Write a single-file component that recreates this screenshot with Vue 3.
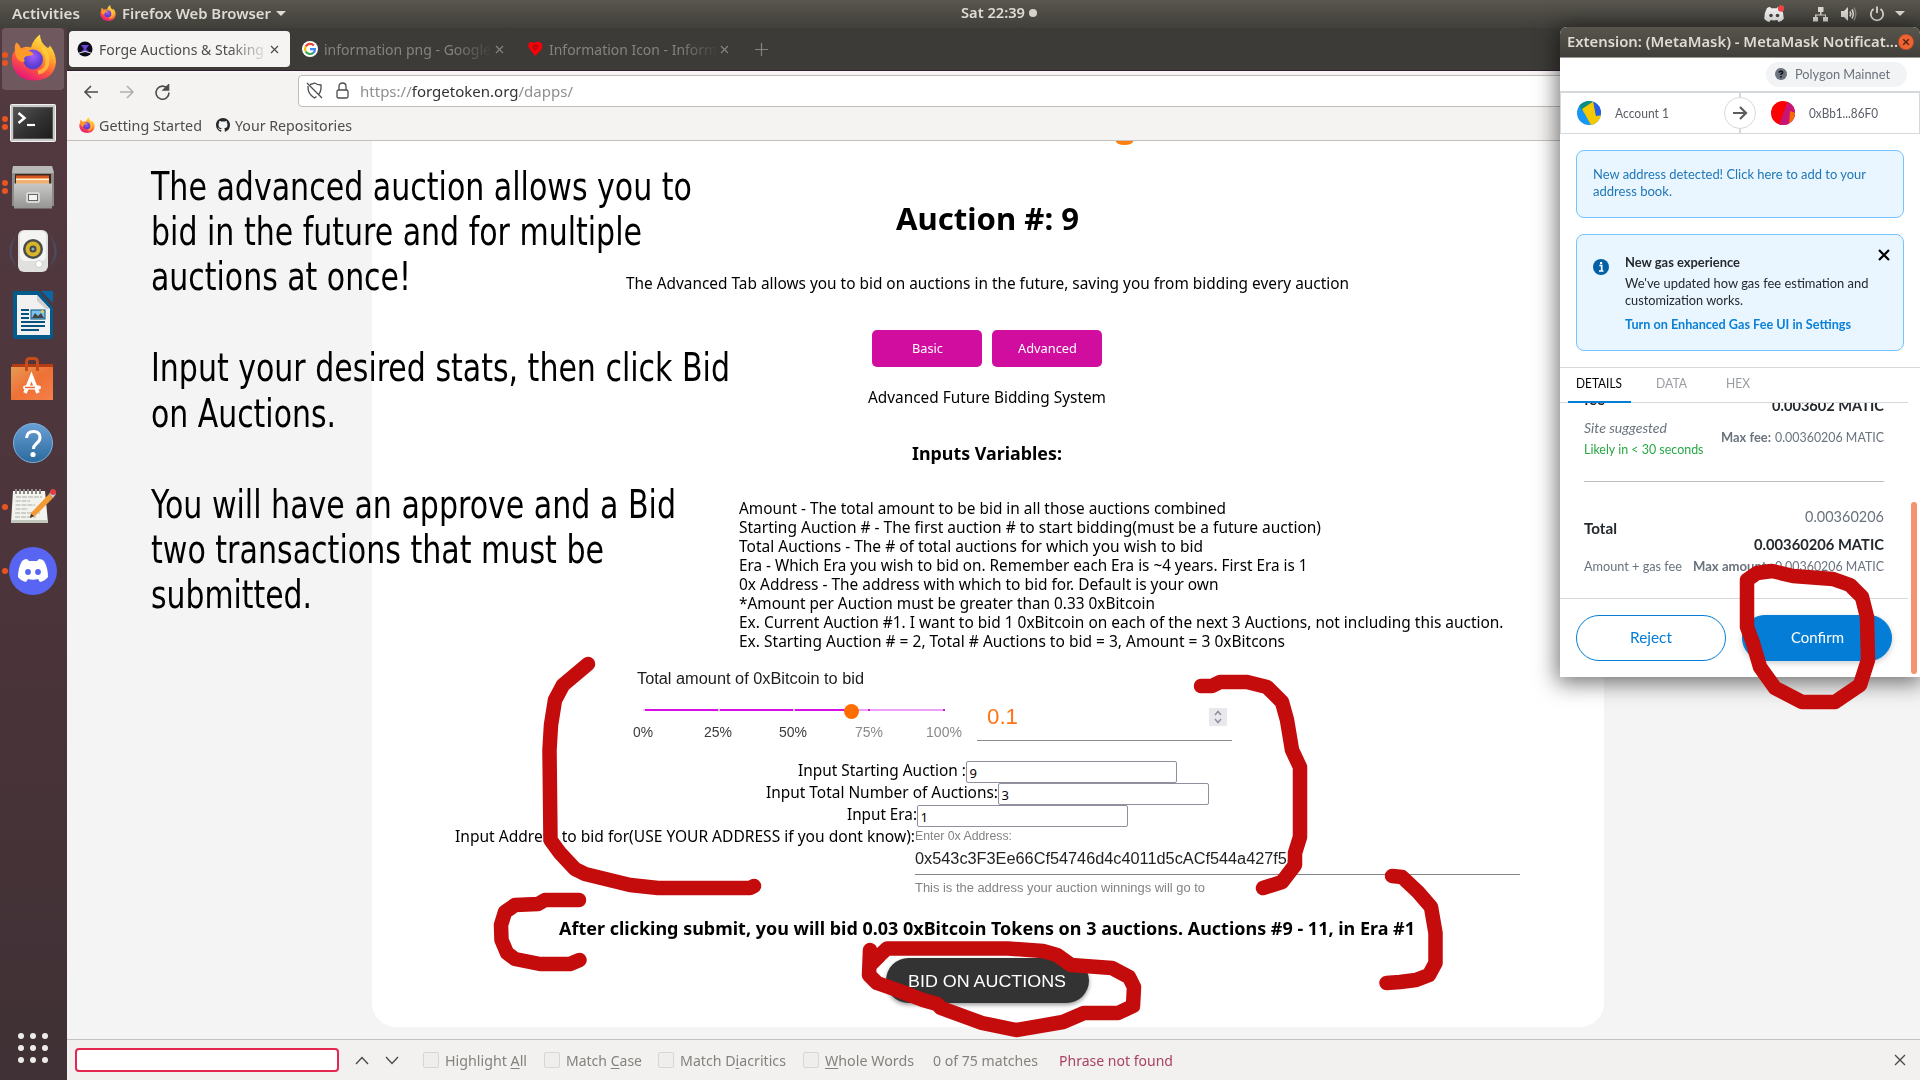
<script setup>
// Condenses or widens a single line of text so that it occupies the given width.
const vFit = {
  mounted(el, { value }) {
    el.style.display = 'inline-block'
    el.style.whiteSpace = 'nowrap'
    const natural = el.getBoundingClientRect().width
    el.style.transformOrigin = '0 50%'
    el.style.transform = `scaleX(${value / natural})`
    el.style.marginRight = `${value - natural}px`
  },
}

const note = [
  ['The advanced auction allows you to', 541],
  ['bid in the future and for multiple', 491],
  ['auctions at once!', 260],
  ['', 0],
  ['Input your desired stats, then click Bid', 579],
  ['on Auctions.', 185],
  ['', 0],
  ['You will have an approve and a Bid', 525],
  ['two transactions that must be', 453],
  ['submitted.', 161],
]

const rules = [
  ['Amount - The total amount to be bid in all those auctions combined', 487],
  ['Starting Auction # - The first auction # to start bidding(must be a future auction)', 582],
  ['Total Auctions - The # of total auctions for which you wish to bid', 464],
  ['Era - Which Era you wish to bid on. Remember each Era is ~4 years. First Era is 1', 568.5],
  ['0x Address - The address with which to bid for. Default is your own', 479.5],
  ['*Amount per Auction must be greater than 0.33 0xBitcoin', 416],
  ['Ex. Current Auction #1. I want to bid 1 0xBitcoin on each of the next 3 Auctions, not including this auction.', 764.5],
  ['Ex. Starting Auction # = 2, Total # Auctions to bid = 3, Amount = 3 0xBitcons', 546],
]

const inputs = [
  ['Input Starting Auction :', 168, '9'],
  ['Input Total Number of Auctions:', 232, '3'],
  ['Input Era:', 70, '1'],
]

const ticks = [
  ['0%', 20, true],
  ['25%', 28, true],
  ['50%', 28, true],
  ['75%', 28, false],
  ['100%', 36, false],
]

const findOptions = [
  ['Highlight ', 'A', 'll', 82],
  ['Match ', 'C', 'ase', 76],
  ['Match D', 'i', 'acritics', 106],
  ['', 'W', 'hole Words', 89],
]

const strokes = [
  'M588 664L563 685L555 700L551 725L549.5 750L550.5 840L560 853L575 869L585 874L630 885L658 888L750 888L754 886',
  'M579 900H545L538 904L515 905L505 912L501 925L501.500 940L507 953L515 959L540 964H570L579.500 960',
  'M1201 686H1212L1220 682H1247L1267 687L1282 702L1287 720L1292 750L1300 767V837L1295 853V865L1282 882L1263 888',
  'M1392 876L1402 877L1418 892L1431 907L1435.500 933V963L1429 975L1416 980L1400 982L1386.500 983',
  'M870 950L869 975L877 983L897 990L923 1000L937 1004L941 1008L982 1023L1016 1030L1063 1022L1084 1013H1118L1133 1006L1134 987L1129 977L1112 968L1071 965L1057 955L1043 951L1008 948.500H887L880 955L870 965',
  'M1747 580V627L1753 643L1760 667L1775 688L1802 702H1835L1860 685L1868 660L1867 617L1862 597L1850 585L1833 579L1793 576L1772 571L1757 573Z',
]
</script>

<template>
  <div class="desktop">
    <svg class="defs" width="0" height="0">
      <defs>
        <linearGradient id="flame" x1=".8" y1="0" x2=".3" y2="1">
          <stop offset="0" stop-color="#fff44f" /><stop offset=".35" stop-color="#ffb02e" />
          <stop offset=".65" stop-color="#ff5a3c" /><stop offset="1" stop-color="#e5127d" />
        </linearGradient>
        <radialGradient id="globe" cx=".5" cy=".35">
          <stop offset="0" stop-color="#a45cff" /><stop offset="1" stop-color="#5a3fd0" />
        </radialGradient>
        <linearGradient id="metal" x1="0" y1="0" x2="0" y2="1">
          <stop offset="0" stop-color="#c9c9c7" /><stop offset="1" stop-color="#949492" />
        </linearGradient>
        <linearGradient id="screen" x1="0" y1="0" x2="1" y2="1">
          <stop offset="0" stop-color="#555" /><stop offset=".5" stop-color="#333" /><stop offset="1" stop-color="#1c1c1c" />
        </linearGradient>
        <linearGradient id="help" x1="0" y1="0" x2="0" y2="1">
          <stop offset="0" stop-color="#6a9fd6" /><stop offset="1" stop-color="#2a6a9c" />
        </linearGradient>
        <linearGradient id="bag" x1="0" y1="0" x2="1" y2="1">
          <stop offset="0" stop-color="#e79a55" /><stop offset=".5" stop-color="#ef7135" /><stop offset="1" stop-color="#f58049" />
        </linearGradient>
        <symbol id="fox" viewBox="0 0 46 46">
          <path fill="url(#flame)" d="M5 8Q8 9 10 14Q14 11 20 13Q22 5 29 0Q29 8 36 13Q38 14 39 11Q45 19 45 28Q43 45 24 46Q4 46 1 28Q0 20 4 16Q3 12 5 8Z" />
          <circle cx="22" cy="25" r="10" fill="url(#globe)" />
          <path fill="#ff9a2a" d="M5 9Q8 12 11 15Q16 14 21 18Q24 20 20 21Q14 21 13 24Q15 29 10 27Q2 24 5 9Z" />
          <path fill="none" stroke="#ffd23a" stroke-width="4" d="M31 13Q38 20 36 30Q34 37 27 38" opacity=".7" />
        </symbol>
        <symbol id="discord" viewBox="0 0 30 23">
          <path d="M9 0Q6 0 4 2Q0 9 0 18Q3 22 8 23L10 20Q15 21.500 20 20L22 23Q27 22 30 18Q30 9 26 2Q24 0 21 0L19 2H11Z" />
        </symbol>
      </defs>
    </svg>

    <header class="topbar">
      <b class="activities"><span v-fit="68">Activities</span></b>
      <svg class="app-ico" width="16" height="16"><use href="#fox" /></svg>
      <b class="app-name"><span v-fit="149">Firefox Web Browser</span></b>
      <i class="caret app-caret"></i>
      <div class="clock"><b><span v-fit="64">Sat 22:39</span></b><i></i></div>
      <div class="tray">
        <svg width="22" height="18" viewBox="0 0 22 18"><use href="#discord" y="2" width="20" height="15" fill="#f2f2f2" /><circle cx="7" cy="10.500" r="1.800" fill="#4a4842" /><circle cx="13.500" cy="10.500" r="1.800" fill="#4a4842" /><circle cx="17" cy="3.500" r="3.200" fill="#f04747" /></svg>
        <svg width="16" height="16" fill="#dfdbd2"><path d="M5 1h5.500v5H8.500v2.500H13V11h2v4.500h-5V11h2V9.500H3.500V11H5v4.500H0V11h2V8.500h5V6H5z" /></svg>
        <svg width="17" height="16"><path d="M0 5h3l4-4v14l-4-4H0z" fill="#dfdbd2" /><path d="M9 5.500Q10.500 8 9 10.500M11 3.500Q13.500 8 11 12.500" fill="none" stroke="#dfdbd2" stroke-width="1.600" /><path d="M13 1.500Q16.500 8 13 14.500" fill="none" stroke="#8a8780" stroke-width="1.500" /></svg>
        <svg width="16" height="16" fill="none" stroke="#dfdbd2" stroke-width="1.800"><path d="M4.500 3A6.200 6.200 0 1 0 11.500 3M8 .5V7" /></svg>
        <i class="caret"></i>
      </div>
    </header>

    <div class="main">
      <nav class="dock">
        <div class="tile first"><svg width="46" height="47"><use href="#fox" /></svg><i class="run a"></i><i class="run b"></i></div>
        <div class="tile">
          <svg width="46" height="38"><rect x=".5" y=".5" width="45" height="37" rx="1" fill="#c9c9c9" stroke="#f1f1f1" /><rect x="3.500" y="3.500" width="39" height="31" fill="url(#screen)" stroke="#555" /><path d="M8.500 9L14.500 14L8.500 19" fill="none" stroke="#fff" stroke-width="2.500" /><path d="M17 21H25" stroke="#fff" stroke-width="2.200" /></svg>
          <i class="run a"></i><i class="run b"></i>
        </div>
        <div class="tile">
          <svg width="44" height="44"><path d="M2 1H41L43 8V41H1V8Z" fill="#8c8c8a" /><path d="M2 1H41L43 8H1Z" fill="#b9b9b7" /><rect x="4" y="9" width="36" height="10" fill="#3a2a22" /><path d="M5 10.500H38V19H5Z" fill="#d9581f" /><path d="M5 13H38V19H5Z" fill="#f0b070" /><path d="M5 14.500H38" stroke="#fff3df" /><rect x="3" y="18.500" width="38" height="25" fill="url(#metal)" /><rect x="15" y="27" width="14" height="11" rx="2.500" fill="#d8d8d6" /><rect x="17.500" y="29.500" width="9" height="6" fill="#f3f3f3" stroke="#666" /></svg>
          <i class="run a"></i><i class="run b"></i>
        </div>
        <div class="tile">
          <svg width="48" height="44"><path d="M6 8Q-2 22 6 36M42 8Q50 22 42 36M3 13Q-1 22 3 31M45 13Q49 22 45 31" fill="none" stroke="#4d4a60" stroke-width="1.400" /><rect x="9" y="1" width="30" height="42" rx="6" fill="#e0e0de" /><rect x="11" y="2" width="26" height="30" rx="5" fill="#f4f4f2" /><circle cx="24" cy="20" r="10" fill="#4c4c4a" /><circle cx="24" cy="20" r="7.500" fill="#d8b52a" /><circle cx="24" cy="20" r="3.500" fill="#44494d" /><circle cx="24" cy="20" r="1.500" fill="#9aa" /><circle cx="30" cy="35" r="3.500" fill="#fff" stroke="#ccc" /></svg>
        </div>
        <div class="tile">
          <svg width="40" height="48"><path d="M2 0H26L40 17V46Q40 48 38 48H2Q0 48 0 46V2Q0 0 2 0Z" fill="#055a8c" /><path d="M28 0H40V12Z" fill="#0a67a3" /><path d="M4 4H24L37 18V44H4Z" fill="#f1f1f1" /><path d="M24 4V10L33 18H37Z" fill="#cfcfcf" /><path d="M8 19H16M8 23H16M8 27H16M8 31H32M8 35H32M8 39H26" stroke="#07527f" stroke-width="1.800" /><rect x="18" y="19" width="14" height="9" fill="#7cc4ef" stroke="#07527f" /><path d="M19 27L22 22L25 25L28 22L31 27Z" fill="#444" /><circle cx="29.500" cy="20.500" r="1.500" fill="#f3cf3a" /></svg>
        </div>
        <div class="tile">
          <svg width="44" height="44"><path d="M1 7H42V14H1Z" fill="#b33c12" /><rect x="0" y="10" width="42" height="33" fill="url(#bag)" /><path d="M15.500 14V5Q15.500 1.500 19 1.500H23Q26.500 1.500 26.500 5V14" fill="none" stroke="#c94a1c" stroke-width="3" /><path d="M14 36L20.500 19.500L27 36" fill="none" stroke="#fff" stroke-width="3.600" /><rect x="12" y="28.500" width="18" height="4" rx="2" fill="#fff" /><path d="M14 30.500H24" stroke="#ef6b30" stroke-width="1.500" /></svg>
        </div>
        <div class="tile"><svg width="42" height="42"><circle cx="21" cy="21" r="19.500" fill="url(#help)" stroke="#7fb0dd" /><path d="M14.500 16Q15 9.500 21.500 9.500Q28 9.500 28 15.500Q28 19 24 22Q21.500 24 21.500 27" fill="none" stroke="#fff" stroke-width="3" /><circle cx="21" cy="32.500" r="2.600" fill="#fff" /></svg></div>
        <div class="tile pad">
          <svg width="46" height="38"><path d="M3 4H35L38 36H1Z" fill="#f3f3ee" /><path d="M1 33H38V36H1Z" fill="#c3c6ba" /><path d="M6 10H32M5.500 14H20M5.500 18H25M5.500 22H18M5 26H30M5 30H26" stroke="#aaa" stroke-dasharray="5 1" /><path d="M6 2V7M10 2V7M14 2V7M18 2V7M22 2V7M26 2V7M30 2V7" stroke="#888" stroke-width="2" /><path d="M21 26L39 7L43 11L25 29L20 31Z" fill="#f29b35" /><path d="M39 7L42 3L46 7L43 11Z" fill="#ccc" /><circle cx="43" cy="5" r="3" fill="#e33d44" /><path d="M20 31L21 27L24 29Z" fill="#333" /></svg>
          <i class="run c"></i>
        </div>
        <div class="tile"><svg width="48" height="48"><circle cx="24" cy="24" r="24" fill="#5865f2" /><use href="#discord" x="9" y="12" width="30" height="23" fill="#fff" /><circle cx="19" cy="25" r="2.900" fill="#5865f2" /><circle cx="29" cy="25" r="2.900" fill="#5865f2" /></svg><i class="run c"></i></div>
        <div class="apps"><i v-for="n in 9" :key="n"></i></div>
      </nav>

      <section class="browser">
        <div class="tabs">
          <div class="tab on">
            <svg width="16" height="16"><circle cx="8" cy="8" r="7.500" fill="#0c0a18" /><path d="M4 4H12L9 8L12 11H4L7 8Z" fill="#6a42d8" /><path d="M2 12Q8 9 14 12" stroke="#ddd" fill="none" /></svg>
            <div class="label"><span v-fit="165">Forge Auctions &amp; Staking</span></div>
            <svg class="x" width="9" height="9"><path d="M1 1L8 8M8 1L1 8" /></svg>
          </div>
          <div class="tab">
            <svg width="16" height="16"><circle cx="8" cy="8" r="8" fill="#fff" /><g fill="none" stroke-width="2.200"><path d="M11.800 4.500A5 5 0 0 0 3.700 5.500" stroke="#ea4335" /><path d="M3.700 5.500A5 5 0 0 0 3.700 10.500" stroke="#fbbc05" /><path d="M3.700 10.500A5 5 0 0 0 11.300 11.800" stroke="#34a853" /><path d="M11.300 11.800A5 5 0 0 0 13 8.200H8" stroke="#4285f4" /></g></svg>
            <div class="label"><span v-fit="167">information png - Google</span></div>
            <svg class="x" width="9" height="9"><path d="M1 1L8 8M8 1L1 8" /></svg>
          </div>
          <div class="tab">
            <svg width="16" height="16"><path d="M8 15L2 7Q0 2 4 1Q6 1 7 2Q12-1 15 3Q16 7 13 10Z" fill="#fb0007" /><path d="M8 6Q10 5 10 7Q9 9 7 8Q5 6 7 4Q10 3 12 6" fill="none" stroke="#8b1010" /></svg>
            <div class="label"><span v-fit="168">Information Icon - Inform</span></div>
            <svg class="x" width="9" height="9"><path d="M1 1L8 8M8 1L1 8" /></svg>
          </div>
          <svg class="plus" width="13" height="13"><path d="M6.500 0V13M0 6.500H13" /></svg>
        </div>

        <div class="toolbar">
          <svg class="t-back" width="16" height="14"><path d="M15 7H2M8 1L2 7L8 13" /></svg>
          <svg class="t-fwd" width="16" height="14"><path d="M1 7H14M8 1L14 7L8 13" /></svg>
          <svg class="t-load" width="17" height="17"><path d="M13.500 4.500A6.500 6.500 0 1 0 15 8.500" /><path d="M14.500 1V6H9.500Z" fill="#4c4c4a" /></svg>
          <div class="url">
            <svg width="17" height="17"><path d="M4 2.500Q7 2 8.500 1Q11.500 3 15 3Q15.500 9 12.500 13M10.500 14.500L8.500 16Q1.500 12 2 4M1 1L16 16" /></svg>
            <svg class="lock" width="13" height="17"><rect x="1" y="8" width="11" height="8" rx="1.500" /><path d="M3 8V4.500Q3 1 6.500 1Q10 1 10 4.500V8" /></svg>
            <span v-fit="213"><em>https://</em>forgetoken.org<em>/dapps/</em></span>
          </div>
        </div>
        <div class="bookmarks">
          <svg width="16" height="16"><use href="#fox" /></svg><span v-fit="103" class="bm1">Getting Started</span>
          <svg width="14" height="14" viewBox="0 0 16 16"><path fill="#24292f" d="M8 0C3.580 0 0 3.580 0 8c0 3.540 2.290 6.530 5.470 7.590.4.070.55-.17.55-.38 0-.19-.01-.82-.01-1.490-2.010.37-2.530-.49-2.690-.94-.09-.23-.48-.94-.82-1.130-.28-.15-.68-.52-.01-.53.63-.01 1.080.58 1.230.82.72 1.210 1.870.87 2.330.66.07-.52.28-.87.51-1.070-1.780-.2-3.640-.89-3.640-3.950 0-.87.31-1.590.82-2.150-.08-.2-.36-1.020.08-2.120 0 0 .67-.21 2.200.82a7.600 7.600 0 0 1 4 0c1.530-1.040 2.200-.82 2.200-.82.44 1.100.16 1.920.08 2.120.51.56.82 1.270.82 2.150 0 3.070-1.870 3.750-3.650 3.950.29.25.54.73.54 1.480 0 1.070-.01 1.930-.01 2.200 0 .21.15.46.55.38A8 8 0 0 0 16 8c0-4.420-3.580-8-8-8z" /></svg><span v-fit="117">Your Repositories</span>
        </div>

        <div class="page">
          <main class="card">
            <div class="logo"></div>
            <h1><span v-fit="183">Auction #: 9</span></h1>
            <p class="sub"><span v-fit="723">The Advanced Tab allows you to bid on auctions in the future, saving you from bidding every auction</span></p>
            <div class="buttons"><button><span v-fit="31">Basic</span></button><button><span v-fit="59">Advanced</span></button></div>
            <p class="system"><span v-fit="238">Advanced Future Bidding System</span></p>
            <h3><span v-fit="150">Inputs Variables:</span></h3>
            <ul class="rules"><li v-for="r in rules" :key="r[0]"><span v-fit="r[1]">{{ r[0] }}</span></li></ul>
            <div class="amount">
              <div class="range">
                <div class="range-title"><span v-fit="227">Total amount of 0xBitcoin to bid</span></div>
                <div class="track"><div class="filled"></div><i class="m m0"></i><i class="m m1"></i><i class="m m2"></i><i class="m m3"></i><i class="m m4"></i><div class="thumb"></div></div>
                <div class="ticks"><div v-for="t in ticks" :key="t[0]" :class="{ lit: t[2] }"><span v-fit="t[1]">{{ t[0] }}</span></div></div>
              </div>
              <div class="value"><span v-fit="31">0.1</span><svg width="18" height="18"><rect width="18" height="18" fill="#e9e9ed" /><path d="M6 7L9 3.500L12 7M6 11L9 14.500L12 11" fill="none" stroke="#8f8f9d" stroke-width="1.500" /></svg></div>
            </div>
            <div class="fields">
              <div v-for="f in inputs" :key="f[0]" class="field"><span v-fit="f[1]">{{ f[0] }}</span><div class="box">{{ f[2] }}</div></div>
              <div class="field addr">
                <span v-fit="460">Input Address to bid for(USE YOUR ADDRESS if you dont know):</span>
                <div class="address">
                  <small><span v-fit="97">Enter 0x Address:</span></small>
                  <div class="hex"><span v-fit="381">0x543c3F3Ee66Cf54746d4c4011d5cACf544a427f5a</span></div>
                  <small class="helper"><span v-fit="290">This is the address your auction winnings will go to</span></small>
                </div>
              </div>
            </div>
            <h3 class="after"><span v-fit="856">After clicking submit, you will bid 0.03 0xBitcoin Tokens on 3 auctions. Auctions #9 - 11, in Era #1</span></h3>
            <div class="bid"><span v-fit="158">BID ON AUCTIONS</span></div>
          </main>
        </div>

        <footer class="find">
          <div class="find-input"></div>
          <svg width="14" height="9"><path d="M1 8L7 1.500L13 8" /></svg>
          <svg width="14" height="9"><path d="M1 1L7 7.500L13 1" /></svg>
          <div class="opts"><label v-for="o in findOptions" :key="o[1]"><i></i><span v-fit="o[3]">{{ o[0] }}<u>{{ o[1] }}</u>{{ o[2] }}</span></label></div>
          <span v-fit="105" class="count">0 of 75 matches</span>
          <span v-fit="114" class="nf">Phrase not found</span>
          <svg class="find-x" width="12" height="12"><path d="M1 1L11 11M11 1L1 11" /></svg>
        </footer>
      </section>
    </div>

    <div class="note"><div v-for="(l, i) in note" :key="i"><span v-if="l[0]" v-fit="l[1]">{{ l[0] }}</span></div></div>

    <aside class="mm">
      <div class="mm-title"><b><span v-fit="331">Extension: (MetaMask) - MetaMask Notificat...</span></b><svg width="16" height="16"><circle cx="8" cy="8" r="7.700" fill="#ec6434" stroke="#b9431b" stroke-width=".6" /><path d="M5.200 5.200L10.800 10.800M10.800 5.200L5.200 10.800" stroke="#4a2010" stroke-width="1.300" /></svg></div>
      <div class="net"><div class="pill"><svg width="12" height="12"><circle cx="6" cy="6" r="6" fill="#6a737d" /><path d="M4.200 4.600Q4.300 3.200 6 3.200Q7.800 3.300 7.700 4.600Q7.600 5.500 6 6.200V7" fill="none" stroke="#111" stroke-width="1.400" /><rect x="5.300" y="8" width="1.500" height="1.500" fill="#111" /></svg><span v-fit="95">Polygon Mainnet</span></div></div>
      <div class="route">
        <svg width="24" height="24"><clipPath id="av"><circle cx="12" cy="12" r="12" /></clipPath><g clip-path="url(#av)"><rect width="24" height="24" fill="#1897f2" /><path d="M0 0H24L5 10Z" fill="#0b8c82" /><path d="M5 8L17 0L19 15L24 14V24H14Z" fill="#f5c800" /><path d="M16 0H24V14L19 15Z" fill="#235fe0" /></g></svg>
        <span v-fit="54" class="from">Account 1</span>
        <div class="go"><svg width="16" height="14"><path d="M1 7H14M8 1L14 7L8 13" fill="none" stroke="#5b5d5e" stroke-width="2.200" /></svg></div>
        <svg width="24" height="24"><g clip-path="url(#av)"><rect width="24" height="24" fill="#fb0202" /><path d="M17 0H24V24H8Z" fill="#c81477" /><path d="M19 10L25 12V24H18Z" fill="#f56a05" /></g></svg>
        <span v-fit="69" class="to">0xBb1...86F0</span>
      </div>
      <div class="alert"><div><span v-fit="273">New address detected! Click here to add to your</span></div><div><span v-fit="79">address book.</span></div></div>
      <div class="gas">
        <svg width="16" height="16"><circle cx="8" cy="8" r="8" fill="#0260a4" /><path d="M6.300 6.500H8.700V11.500M6 12H10.500" stroke="#fff" stroke-width="1.700" fill="none" /><rect x="7" y="3" width="2.200" height="2.200" fill="#fff" /></svg>
        <div class="gas-text">
          <b><span v-fit="115">New gas experience</span></b>
          <div><span v-fit="243.500">We've updated how gas fee estimation and</span></div>
          <div><span v-fit="118">customization works.</span></div>
          <b class="link"><span v-fit="226">Turn on Enhanced Gas Fee UI in Settings</span></b>
        </div>
        <svg class="gas-x" width="12" height="12"><path d="M1 1L11 11M11 1L1 11" stroke="#000" stroke-width="2.200" /></svg>
      </div>
      <div class="mm-tabs"><div class="sel"><span v-fit="46">DETAILS</span></div><div><span v-fit="31">DATA</span></div><div><span v-fit="24">HEX</span></div></div>
      <div class="details">
        <div class="line l-fee"><b><span v-fit="21">fee</span></b><b><span v-fit="112">0.003602 MATIC</span></b></div>
        <div class="fee-row">
          <div class="fee-left"><i><span v-fit="83">Site suggested</span></i><div class="green"><span v-fit="119.500">Likely in &lt; 30 seconds</span></div></div>
          <div class="fee-max"><b><span v-fit="50">Max fee:</span></b><span v-fit="109">0.00360206 MATIC</span></div>
        </div>
        <div class="rule"></div>
        <div class="total-top"><span v-fit="79">0.00360206</span></div>
        <div class="total"><b><span v-fit="33">Total</span></b></div>
        <div class="total-main"><b><span v-fit="130">0.00360206 MATIC</span></b></div>
        <div class="total-sub"><span v-fit="98">Amount + gas fee</span><div><b><span v-fit="77">Max amount:</span></b><span v-fit="109">0.00360206 MATIC</span></div></div>
      </div>
      <div class="actions"><div class="act"><span v-fit="42">Reject</span></div><div class="act fill"><span v-fit="53">Confirm</span></div></div>
      <div class="mm-scroll"></div>
    </aside>

    <svg class="ink" width="1920" height="1080"><path v-for="s in strokes" :key="s" :d="s" /></svg>
  </div>
</template>

<style>
body { margin: 0; overflow: hidden; }
</style>

<style scoped>
* { box-sizing: border-box; }
.desktop { position: relative; width: 1920px; height: 1080px; overflow: hidden; display: flex; flex-direction: column; font-family: "Noto Sans", sans-serif; color: #000; font-size: 16px; }
.defs { position: absolute; }
svg { display: block; flex: none; }
p, h1, h3, ul { margin: 0; padding: 0; list-style: none; font-weight: normal; }
.topbar { height: 28px; display: flex; align-items: center; background: linear-gradient(#59564e, #403f3a); color: #dfdbd2; font-size: 14.5px; line-height: 27px; padding-left: 12px; padding-bottom: 1px; }
.topbar b { font-weight: 600; }
.activities { width: 88px; }
.app-ico { margin-right: 6px; margin-top: -1px; }
.caret { width: 0; height: 0; border: 5px solid transparent; border-top: 5px solid #dfdbd2; border-bottom: 0; }
.app-caret { margin-left: 5px; }
.clock { margin-left: 675px; display: flex; align-items: center; gap: 4px; margin-top: -2px; }
.clock i { width: 8px; height: 8px; border-radius: 50%; background: #d5d2ca; }
.tray { display: flex; align-items: center; margin-left: auto; padding-right: 15px; }
.tray svg:nth-child(1) { margin-right: 27px; }
.tray svg:nth-child(2) { margin-right: 12px; }
.tray svg:nth-child(3) { margin-right: 11px; }
.tray svg:nth-child(4) { margin-right: 10px; }
.main { flex: 1; display: flex; min-height: 0; }

.dock { width: 67px; background: linear-gradient(#523a40, #4b343a 55%, #3f3135); display: flex; flex-direction: column; }
.tile { position: relative; height: 64px; width: 66px; display: flex; align-items: center; justify-content: center; padding-bottom: 2px; }
.tile.first { height: 62px; width: 62px; margin: 0 0 2px 2px; background: #70595e; border-radius: 4px; padding-bottom: 3px; }
.tile.first svg { margin-left: 1px; }
.tile.first .run { left: 0; }
.tile.pad { padding-bottom: 5px; }
.run { position: absolute; left: 2px; width: 6px; height: 6px; border-radius: 50%; background: #e95420; }
.run.a { top: 24px; } .run.b { top: 32px; } .run.c { top: 28px; }
.apps { margin: auto 0 17px 18px; width: 30px; display: grid; grid-template-columns: repeat(3, 6px); gap: 6px; }
.apps i { width: 6px; height: 6px; border-radius: 50%; background: #eeecea; }

.browser { flex: 1; display: flex; flex-direction: column; color: #4c4c4a; min-width: 0; }
.tabs { height: 43px; background: #3c3b37; border-bottom: 1px solid #2c2130; display: flex; padding: 3px 0 3px 2px; font-size: 14.500px; }
.tab { width: 221px; height: 36px; display: flex; align-items: center; padding-left: 8px; color: #84837e; margin-right: 4px; border-radius: 4px; }
.tab.on { background: #f5f4f2; color: #4c4c4a; }
.label { width: 171px; margin-left: 6px; overflow: hidden; line-height: 34px; -webkit-mask-image: linear-gradient(90deg, #000 130px, transparent 170px); mask-image: linear-gradient(90deg, #000 130px, transparent 170px); }
.x, .plus { fill: none; stroke: currentColor; stroke-width: 1.200; }
.plus { stroke: #84837e; margin: 12px 0 0 11px; }
.toolbar { height: 41px; flex: none; background: #f4f3f1; display: flex; align-items: flex-start; padding: 4px 0 0 16px; border-top: 2px solid #faf4f6; }
.toolbar svg { fill: none; stroke: #4c4c4a; stroke-width: 1.600; }
.t-back { margin-top: 8px; } .t-fwd { margin: 8px 0 0 20px; opacity: .4; } .t-load { margin: 7px 0 0 19px; }
.toolbar .url { margin: -2px 0 0 127px; height: 32px; flex: 1; border: 1px solid #bfbbb7; border-radius: 4px 0 0 4px; background: #fff; display: flex; align-items: center; padding-left: 7px; font-size: 14.500px; color: #333; }
.url svg { stroke-width: 1.300; margin-top: -1px; }
.toolbar .lock { margin: -1px 11px 0 13px; }
.url em { font-style: normal; color: #8f8f8e; }
.bookmarks { height: 29px; flex: none; background: #f4f3f1; border-bottom: 1px solid #c5c0bb; display: flex; align-items: center; padding: 0 0 2px 12px; font-size: 14.500px; gap: 4px; }
.bm1 + svg { margin-left: 10px; margin-right: 1px; }

.page { flex: 1; background: #f4f4f4; min-height: 0; overflow: hidden; }
.card { margin-left: 305px; width: 1232px; height: 886px; padding-right: 2px; background: #fff; border-radius: 0 0 24px 24px; display: flex; flex-direction: column; align-items: center; color: #000; font-size: 15.500px; }
.card > * { flex: none; }
.logo { align-self: flex-start; margin-left: 744px; width: 17px; height: 4px; background: #ff7f0e; border-radius: 0 0 9px 9px / 0 0 4px 4px; }
h1 { margin-top: 51px; height: 44px; line-height: 44px; font-size: 31px; font-weight: 700; }
.sub { margin-top: 33px; line-height: 20px; height: 20px; }
.buttons { margin-top: 37px; display: flex; gap: 10px; }
.buttons button { width: 110px; height: 37px; border: 0; border-radius: 5px; background: #d10da0; color: #fff; font: 13px/37px "Noto Sans", sans-serif; padding: 0; }
.system { margin-top: 20px; line-height: 20px; height: 20px; }
h3 { margin-top: 34px; line-height: 24px; height: 24px; font-size: 18px; font-weight: 700; }
.rules { align-self: flex-start; margin: 34px 0 0 366.500px; }
.rules li { height: 19px; line-height: 19px; }
.amount { align-self: flex-start; margin: 18px 0 0 265px; display: flex; font-family: "Liberation Sans", sans-serif; height: 72px; }
.range { width: 340px; }
.range-title { line-height: 20px; height: 20px; font-size: 16px; color: #1c1c1c; }
.track { position: relative; margin: 20px 0 0 6px; width: 302px; height: 2px; background: #eea0f8; }
.filled { width: 208px; height: 2px; background: #d90ee6; }
.m { position: absolute; top: 0; width: 2px; height: 2px; background: #f2c0f8; }
.m0 { left: 0; } .m1 { left: 75px; } .m2 { left: 150px; } .m3 { left: 225px; background: #c51fd0; } .m4 { left: 300px; background: #c51fd0; }
.thumb { position: absolute; left: 201px; top: -5px; width: 15px; height: 15px; border-radius: 50%; background: #ff6d00; }
.ticks { margin: 13px 0 0 -31.500px; display: flex; font-size: 14px; line-height: 16px; color: #8a8a8a; }
.ticks div { flex: none; width: 75.200px; display: flex; justify-content: center; }
.ticks .lit { color: #3a3a3a; }
.value { width: 255px; border-bottom: 1px solid #8c8c8c; display: flex; justify-content: space-between; padding: 39px 5px 0 10px; font-size: 22px; line-height: 24px; color: #ff7414; }
.value span { margin-top: -3px; }
.fields { margin-top: 20px; width: 100%; }
.field { height: 22px; display: flex; justify-content: center; line-height: 18px; }
.box { width: 211px; height: 22px; border: 1px solid #8f8f9d; border-radius: 2px; padding-left: 3px; font-size: 13px; line-height: 22px; }
.addr { height: 89px; }
.address { width: 605px; font-family: "Liberation Sans", sans-serif; display: flex; flex-direction: column; }
.address small { font-size: 12px; line-height: 16px; height: 16px; margin-top: 1px; color: #838383; }
.hex { margin-top: 2px; height: 29px; line-height: 25px; font-size: 16px; border-bottom: 1px solid #858585; color: #222; }
.address .helper { margin-top: 5px; }
.after { margin-top: 0; }
.bid { margin-top: 18px; width: 203px; height: 45px; border-radius: 23px; background: #333; color: #fff; font: 16px/47px "Liberation Sans", sans-serif; text-align: center; box-shadow: 0 2px 4px rgba(0, 0, 0, .4); }

.find { height: 41px; flex: none; background: #f2f1ef; border-top: 1px solid #c4c1be; display: flex; align-items: center; padding: 0 14px 0 8px; font-size: 14.500px; color: #85827e; }
.find-input { width: 264px; height: 24px; border: 2px solid #e22850; border-radius: 4px; background: #fff; margin-right: 16px; }
.find svg { fill: none; stroke: #4c4c4a; stroke-width: 1.400; margin-right: 16px; }
.opts { display: flex; margin-left: 8px; }
.opts label { display: flex; align-items: center; height: 24px; margin-right: 16px; }
.opts i { width: 16px; height: 16px; border: 1px solid #d8d6d3; border-radius: 2px; margin-right: 6px; background: #efeeec; }
.opts label + label { margin-left: .600px; }
.opts u { text-underline-offset: 2px; }
.count { margin-left: 3px; }
.nf { color: #aa4265; margin-left: 21px; }
.find .find-x { margin: 0 0 0 auto; }

.note { position: absolute; left: 150.500px; top: 163.500px; font: 39px/45.450px "DejaVu Sans Condensed", "DejaVu Sans", sans-serif; }
.note div { height: 45.450px; }

.mm { position: absolute; left: 1560px; top: 27px; width: 360px; height: 650px; background: #fff; border-radius: 7px 7px 0 0; box-shadow: 0 3px 22px 3px rgba(0, 0, 0, .55); font-family: Lato, "Noto Sans", sans-serif; font-size: 12.500px; color: #24292e; display: flex; flex-direction: column; }
.mm > * { flex: none; }
.mm-title { height: 31px; border-radius: 7px 7px 0 0; background: linear-gradient(#58554d, #413f3a); border-bottom: 1px solid #9c9a96; font: 15px/29px "Noto Sans", sans-serif; color: #dfdbd2; display: flex; align-items: center; padding: 0 6px 1px 7px; justify-content: space-between; }
.mm-title b { font-weight: 600; }
.net { height: 33px; display: flex; justify-content: flex-end; padding: 4px 13px 0 0; }
.pill { width: 141px; height: 25px; border-radius: 13px; background: #f2f3f4; display: flex; align-items: center; padding: 0 0 1px 9px; gap: 8px; color: #6a737d; font-size: 13px; }
.route { height: 43px; border: 1px solid #d6d9dc; border-top-width: 2px; display: flex; align-items: center; padding: 0 0 1px 16px; color: #5b5d67; background: linear-gradient(#d6d9dc, #d6d9dc) 178px 0 / 2px 100% no-repeat; font-size: 13px; }
.from { margin-left: 14px; }
.go { width: 32px; height: 32px; border: 1px solid #d6d9dc; border-radius: 50%; background: #fff; margin: 0 15px 0 55px; display: flex; align-items: center; justify-content: center; }
.to { margin-left: 14px; }
.alert { margin: 16px 16px 0; height: 68px; border: 1px solid #75c4fd; border-radius: 8px; background: #eaf6ff; color: #1f77b8; padding: 15px 16px 0; line-height: 17px; }
.gas { margin: 16px 16px 0; height: 117px; border: 1px solid #75c4fd; border-radius: 8px; background: #eaf6ff; padding: 0 13px 0 16px; display: flex; }
.gas > svg { margin-top: 24px; }
.gas-text { margin-left: 16px; width: 243px; padding-top: 19px; line-height: 17px; }
.gas-text b { display: block; height: 17px; margin-bottom: 4px; }
.gas-text .link { margin-top: 7px; color: #0b80d6; }
.gas .gas-x { margin: 14px 0 0 auto; }
.mm-tabs { margin-top: 16px; border-top: 1px solid #d6d9dc; height: 36px; display: flex; padding-left: 8px; color: #9a9ca3; line-height: 32px; font-size: 12.500px; background: linear-gradient(#d6d9dc, #d6d9dc) 0 100% / 348px 1px no-repeat; }
.mm-tabs div { padding: 0 8px; margin-right: 17px; height: 35px; }
.mm-tabs div + div { margin-right: 23px; }
.mm-tabs .sel { border-bottom: 2px solid #037dd6; color: #000; width: 63px; }
.details { height: 196px; width: 348px; padding: 0 24px; overflow: hidden; border-bottom: 1px solid #d6d9dc; color: #6a737d; display: flex; flex-direction: column; }
.details > * { flex: none; }
.l-fee { display: flex; justify-content: space-between; height: 18px; margin-top: -6px; line-height: 18px; font-size: 14.500px; color: #24292e; }
.l-fee b:first-child { margin-top: -6px; }
.fee-row { display: flex; justify-content: space-between; height: 66px; padding-top: 2px; line-height: 21px; }
.fee-left i { display: block; height: 21px; margin-top: 1px; }
.green { color: #28a745; }
.fee-max { display: flex; gap: 4px; padding-top: 10px; }
.rule { height: 1px; background: #bbbdc2; }
.total-top, .total-main { display: flex; justify-content: flex-end; font-size: 14.500px; line-height: 20px; }
.total-top { margin-top: 25px; height: 12px; }
.total { height: 16px; line-height: 20px; color: #24292e; font-size: 14.500px; }
.total-main { height: 22px; color: #24292e; }
.total-sub { display: flex; justify-content: space-between; line-height: 20px; }
.total-sub div { display: flex; gap: 5px; }
.actions { display: flex; gap: 16px; padding: 16px 0 0 16px; }
.act { width: 150px; height: 46px; border: 1px solid #037dd6; border-radius: 23px; color: #037dd6; text-align: center; line-height: 44px; font-size: 14.500px; }
.act.fill { background: #037dd6; color: #fff; box-shadow: 0 2px 6px rgba(0, 0, 0, .2); }
.mm-scroll { position: absolute; right: 3px; top: 475px; width: 6px; height: 172px; border-radius: 3px; background: #f4926d; }
.ink { position: absolute; inset: 0; }
.ink path { fill: none; stroke: #c40c0c; stroke-width: 14.500px; stroke-linecap: round; stroke-linejoin: round; }
</style>
